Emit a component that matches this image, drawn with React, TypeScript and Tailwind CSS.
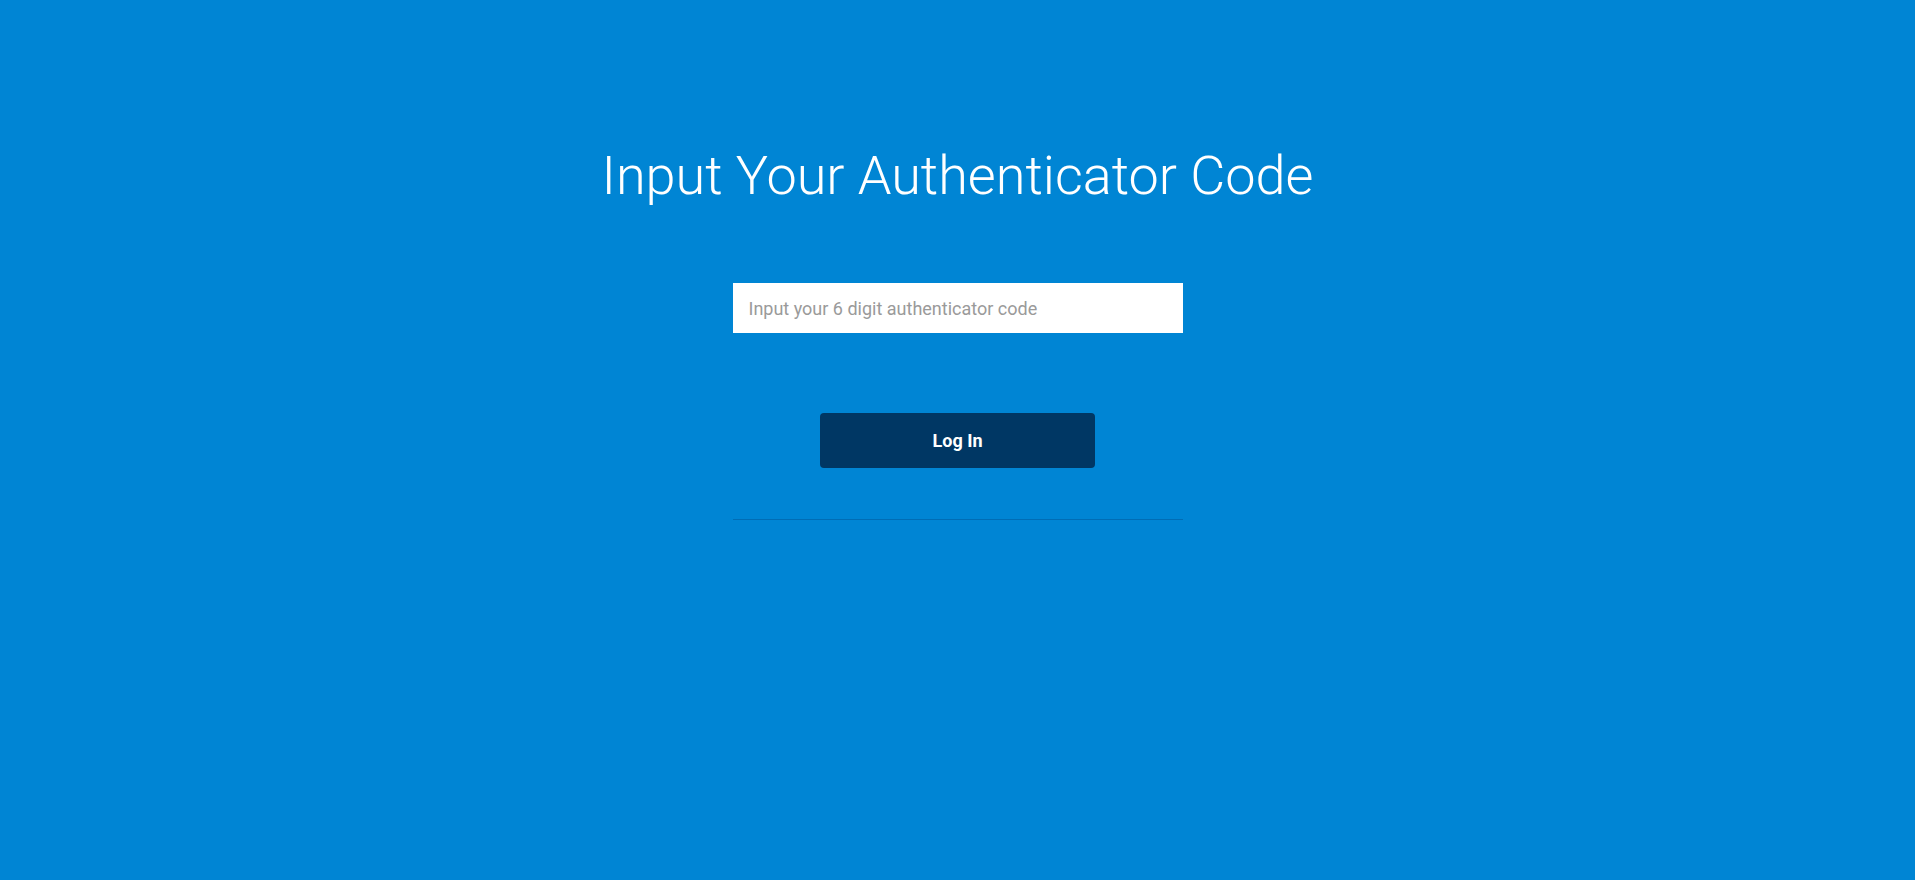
import React, { useState } from 'react';

export default function App() {
  const [code, setCode] = useState<string>('');

  return (
    <div className="min-h-screen w-full bg-[#0085d4] flex flex-col items-center font-['Roboto',sans-serif]">
      <h1 className="mt-[139px] text-[54px] leading-[74px] font-light text-white">
        Input Your Authenticator Code
      </h1>

      <div className="mt-[70px] w-[450px] flex flex-col items-center">
        <input
          type="text"
          autoFocus
          value={code}
          onChange={(e) => setCode(e.target.value)}
          placeholder="Input your 6 digit authenticator code"
          className="w-full h-[50px] bg-white px-4 text-[18px] text-gray-800 caret-gray-700 placeholder:text-[#9a9a9a] outline-none border-0"
        />

        <button className="mt-[80px] w-[275px] h-[55px] rounded bg-[#003764] text-white text-[18px] font-bold">
          Log In
        </button>

        <div className="mt-[51px] w-full h-px bg-[#006db5]" />
      </div>
    </div>
  );
}
